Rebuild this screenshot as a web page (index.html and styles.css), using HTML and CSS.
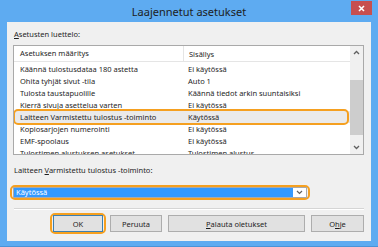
FILE: index.html
```html
<!DOCTYPE html>
<html lang="fi">
<head>
    <meta charset="UTF-8">
    <title>Laajennetut asetukset</title>
    <link rel="stylesheet" href="styles.css">
</head>
<body>
    <div class="window">
        <div class="titlebar">
            <span class="title">Laajennetut asetukset</span>
            <span class="close">
                <svg width="7" height="7" viewBox="0 0 7 7"><path d="M1 1L6 6M6 1L1 6" stroke="#fff" stroke-width="1.6"/></svg>
            </span>
        </div>
        <div class="content">
            <div class="label"><u>A</u>setusten luettelo:</div>

            <div class="listbox">
                <div class="list">
                    <div class="list-head">
                        <div class="col-a">Asetuksen määritys</div>
                        <div class="col-b">Sisällys</div>
                    </div>
                    <div class="row"><div class="col-a">Käännä tulostusdataa 180 astetta</div><div class="col-b">Ei käytössä</div></div>
                    <div class="row"><div class="col-a">Ohita tyhjät sivut -tila</div><div class="col-b">Auto 1</div></div>
                    <div class="row"><div class="col-a">Tulosta taustapuolille</div><div class="col-b">Käännä tiedot arkin suuntaisiksi</div></div>
                    <div class="row"><div class="col-a">Kierrä sivuja asettelua varten</div><div class="col-b">Ei käytössä</div></div>
                    <div class="row selected"><div class="col-a">Laitteen Varmistettu tulostus -toiminto</div><div class="col-b">Käytössä</div></div>
                    <div class="row"><div class="col-a">Kopiosarjojen numerointi</div><div class="col-b">Ei käytössä</div></div>
                    <div class="row"><div class="col-a">EMF-spoolaus</div><div class="col-b">Ei käytössä</div></div>
                    <div class="row"><div class="col-a">Tulostimen alustuksen asetukset</div><div class="col-b">Tulostimen alustus</div></div>
                </div>
                <div class="scrollbar">
                    <svg class="arrow" width="13" height="14" viewBox="0 0 13 14"><path d="M4 8L6.5 5.5L9 8" fill="none" stroke="#606060" stroke-width="1.3"/></svg>
                    <div class="track"><div class="thumb"></div></div>
                    <svg class="arrow" width="13" height="14" viewBox="0 0 13 14"><path d="M4 6L6.5 8.5L9 6" fill="none" stroke="#606060" stroke-width="1.3"/></svg>
                </div>
            </div>

            <div class="label label-combo">Laitteen <u>V</u>armistettu tulostus -toiminto:</div>

            <div class="combo-wrap">
                <div class="combo">
                    <span class="combo-value">Käytössä</span>
                    <span class="combo-arrow">
                        <svg width="7" height="5" viewBox="0 0 7 5"><path d="M1 1L3.5 3.5L6 1" fill="none" stroke="#606060" stroke-width="1.2"/></svg>
                    </span>
                </div>
            </div>

            <div class="separator"></div>

            <div class="buttons">
                <div class="btn-ring"><button class="btn btn-default">OK</button></div>
                <button class="btn btn-cancel">Peruuta</button>
                <button class="btn btn-reset"><u>P</u>alauta oletukset</button>
                <button class="btn btn-help">O<u>h</u>je</button>
            </div>
        </div>
    </div>
</body>
</html>
```

FILE: styles.css
```css
body {
    margin: 0;
    font-family: "Noto Sans", "Liberation Sans", sans-serif;
    background: #5eabf1;
}
.window {
    width: 378px;
    height: 247px;
    background: #5eabf1;
    display: flex;
    flex-direction: column;
    box-sizing: border-box;
    border-bottom: 1px solid #4a93d8;
}
.titlebar {
    height: 22px;
    position: relative;
    display: flex;
    justify-content: center;
    align-items: center;
}
.title {
    font-size: 11px;
    color: #1d1d1d;
    padding-top: 1px;
}
.close {
    position: absolute;
    right: 6px;
    top: 1px;
    width: 21px;
    height: 14px;
    background: #c74f4f;
    display: flex;
    align-items: center;
    justify-content: center;
}
.content {
    margin: 0 7px;
    height: 219px;
    background: #f0f0f0;
    padding: 0 7px 0 6px;
    font-size: 7.5px;
    color: #1e1e1e;
}
.label {
    padding: 8px 0 0 1px;
    height: 15px;
    line-height: 9px;
}
.listbox {
    display: flex;
    height: 108px;
    border: 1px solid #a9a9a9;
    background: #fff;
    overflow: hidden;
}
.list {
    flex: 1;
    overflow: hidden;
}
.list-head {
    display: flex;
    height: 15px;
    border-bottom: 1px solid #e5e5e5;
    align-items: center;
    margin-bottom: 1px;
}
.list-head .col-a {
    border-right: 1px solid #e5e5e5;
    height: 15px;
    line-height: 15px;
}
.row {
    display: flex;
    height: 12px;
    line-height: 12px;
    position: relative;
}
.col-a {
    width: 163px;
    padding-left: 6px;
    white-space: nowrap;
    overflow: hidden;
}
.col-b {
    padding-left: 5px;
    white-space: nowrap;
}
.row.selected {
    background: #eaeaea;
}
.row.selected::after {
    content: "";
    position: absolute;
    left: -1px;
    right: 1px;
    top: -2px;
    bottom: -2px;
    border: 2px solid #f5a020;
    border-radius: 5px;
}
.scrollbar {
    width: 13px;
    background: #f0f0f0;
    display: flex;
    flex-direction: column;
}
.arrow {
    display: block;
}
.track {
    flex: 1;
    padding-top: 20px;
}
.thumb {
    height: 55px;
    background: #cdcdcd;
}
.label-combo {
    padding-top: 11px;
    height: 19px;
}
.combo-wrap {
    width: 294px;
    margin-left: -3px;
    padding: 0 1px;
    border: 2px solid #f5a020;
    border-radius: 5px;
}
.combo {
    display: flex;
    height: 9px;
    border: 1px solid #a9a9a9;
    background: #fff;
}
.combo-value {
    flex: 1;
    background: #3399ff;
    color: #fff;
    line-height: 9px;
    padding-left: 2px;
}
.combo-arrow {
    width: 13px;
    display: flex;
    align-items: center;
    justify-content: center;
}
.separator {
    margin: 8px 0 0 1px;
    border-top: 1px solid #d5d5d5;
    border-bottom: 1px solid #fff;
}
.buttons {
    display: flex;
    justify-content: flex-end;
    align-items: center;
    gap: 6px;
    margin-top: 3px;
}
.btn {
    font-family: inherit;
    font-size: 7.5px;
    color: #1e1e1e;
    height: 17px;
    padding: 0;
    background: #e1e1e1;
    border: 1px solid #adadad;
    border-radius: 0;
}
.btn-ring {
    border: 2px solid #f5a020;
    border-radius: 5px;
    padding: 0 1px;
    margin-right: -2px;
}
.btn-default {
    display: block;
    width: 50px;
    border-color: #3c7fb1;
}
.btn-cancel {
    width: 52px;
}
.btn-reset {
    width: 137px;
}
.btn-help {
    width: 53px;
}
```
